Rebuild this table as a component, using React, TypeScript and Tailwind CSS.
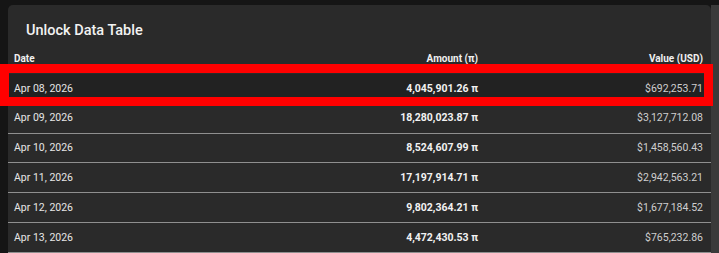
import React from 'react';

const rows = [
  { date: 'Apr 08, 2026', amount: '4,045,901.26 π', value: '$692,253.71' },
  { date: 'Apr 09, 2026', amount: '18,280,023.87 π', value: '$3,127,712.08' },
  { date: 'Apr 10, 2026', amount: '8,524,607.99 π', value: '$1,458,560.43' },
  { date: 'Apr 11, 2026', amount: '17,197,914.71 π', value: '$2,942,563.21' },
  { date: 'Apr 12, 2026', amount: '9,802,364.21 π', value: '$1,677,184.52' },
  { date: 'Apr 13, 2026', amount: '4,472,430.53 π', value: '$765,232.86' },
];

export default function App() {
  return (
    <div
      className="relative w-[719px] h-[253px] overflow-hidden bg-[#151515] flex"
      style={{ fontFamily: 'Roboto, "Liberation Sans", sans-serif' }}
    >
      {/* Card */}
      <div className="ml-[8px] mt-[5px] w-[703px] bg-[#2a2a2a] rounded-t-[5px] flex flex-col">
        <h2 className="pl-[18px] pt-[16px] text-[14.5px] leading-[20px] font-medium text-[#f2f2f2]">
          Unlock Data Table
        </h2>

        {/* Header */}
        <div className="flex pt-[10px] pb-[7px] text-[10px] leading-[16px] font-bold text-[#f0f0f0]">
          <div className="w-[232px] pl-[6px]">Date</div>
          <div className="w-[246px] pr-2 text-right">Amount (π)</div>
          <div className="w-[225px] pr-2 text-right">Value (USD)</div>
        </div>

        {/* Rows */}
        {rows.map((r, i) => (
          <div
            key={r.date}
            className={`flex items-center h-[30px] text-[10.5px] border-b border-[#8f8f8f] ${
              i === 0 ? 'bg-[#222222]' : ''
            }`}
          >
            <div className="w-[232px] pl-[6px] text-[#e6e6e6]">{r.date}</div>
            <div className="w-[246px] pr-2 text-right font-bold text-[#f2f2f2]">{r.amount}</div>
            <div className="w-[225px] pr-2 text-right text-[#cfcfcf]">{r.value}</div>
          </div>
        ))}
      </div>

      {/* Scrollbar strip */}
      <div className="w-[8px] mt-[5px] bg-[#3a3a3a]" />

      {/* Red highlight annotation */}
      <div className="absolute left-0 top-[64px] w-[713px] h-[42px] border-[9px] border-[#ff0000]" />
    </div>
  );
}
